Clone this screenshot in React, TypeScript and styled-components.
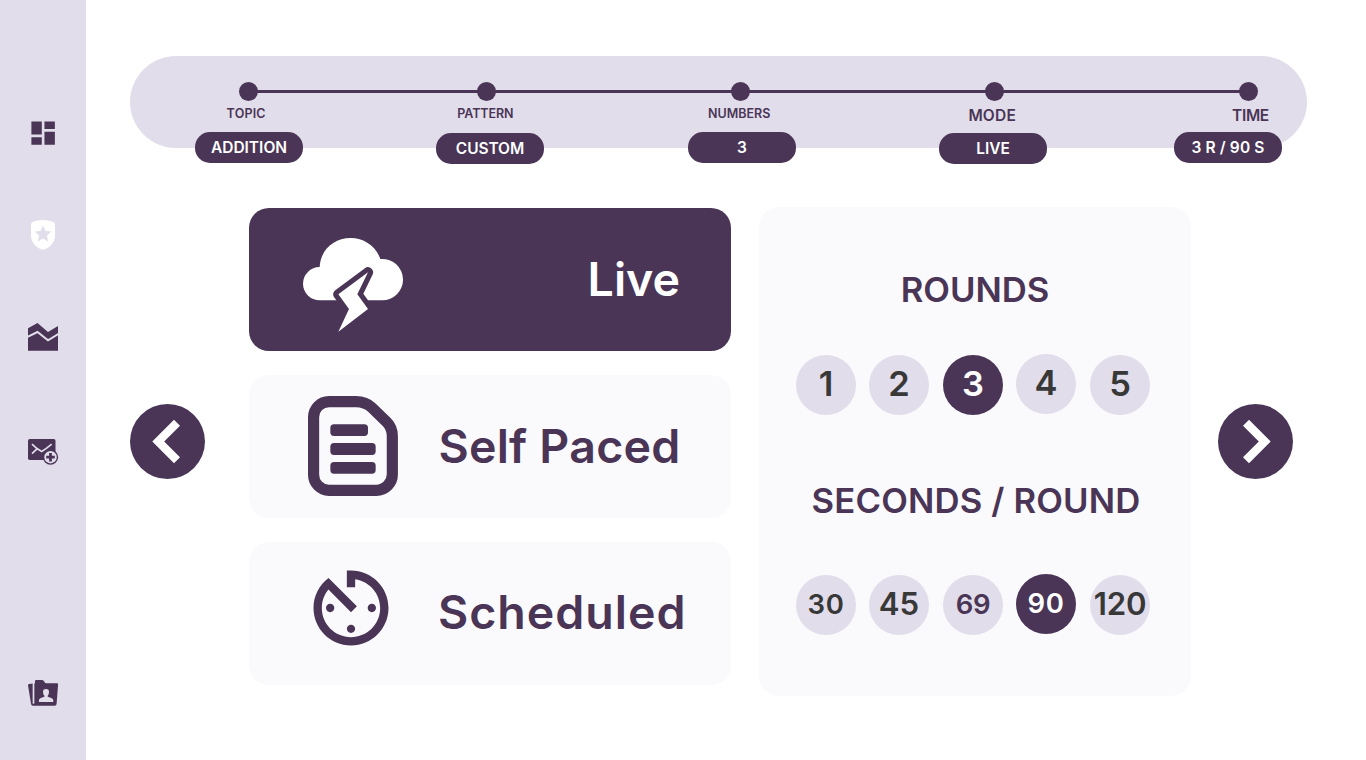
import React from 'react';
import styled, { createGlobalStyle } from 'styled-components';

const plum = '#4a3556';
const lilac = '#e1ddea';
const mist = '#fafafd';
const ink = '#383838';

const GlobalStyle = createGlobalStyle`
  * { box-sizing: border-box; }
  body {
    margin: 0;
    background: #fff;
    color: ${plum};
    font-family: Inter, 'Liberation Sans', sans-serif;
    font-weight: 600;
  }
  svg { display: block; flex: none; }
  button { font: inherit; color: inherit; border: 0; padding: 0; margin: 0; }
`;

const Page = styled.div`
  display: flex;
  width: 1366px;
  height: 760px;
  overflow: hidden;
`;

const Sidebar = styled.nav`
  flex: none;
  width: 86px;
  padding-top: 117px;
  background: ${lilac};
  display: flex;
  flex-direction: column;
  align-items: center;
`;

const NavItem = styled.a<{ $before: number }>`
  margin-top: ${p => p.$before}px;
`;

const Main = styled.main`
  flex: 1;
  padding: 56px 0 0 44px;
`;

const Stepper = styled.header`
  width: 1177px;
  height: 92px;
  border-radius: 46px;
  background: ${lilac};
  padding-top: 26px;
`;

const Track = styled.div`
  display: flex;
  align-items: center;
  padding-left: 109px;
`;

const Dot = styled.span`
  width: 19px;
  height: 19px;
  border-radius: 50%;
  background: ${plum};
`;

const Connector = styled.span<{ $length: number }>`
  width: ${p => p.$length + 2}px;
  height: 3px;
  margin: 0 -1px;
  background: ${plum};
`;

const Labels = styled.div`
  display: flex;
  height: 31px;
  padding-left: 66px;
`;

const StepLabel = styled.span<{ $before: number; $large?: boolean; $spacing?: number }>`
  width: 100px;
  margin-left: ${p => p.$before}px;
  text-align: center;
  font-weight: 600;
  font-size: ${p => (p.$large ? 15.5 : 12.5)}px;
  line-height: ${p => (p.$large ? 29 : 25)}px;
  letter-spacing: ${p => p.$spacing ?? 0}px;
`;

const Pills = styled.div`
  display: flex;
  align-items: flex-start;
  padding-left: 65px;
`;

const Pill = styled.span<{ $before: number; $lowered?: boolean; $spacing?: number }>`
  width: 108px;
  height: 31px;
  margin-left: ${p => p.$before}px;
  margin-top: ${p => (p.$lowered ? 1 : 0)}px;
  border-radius: 15px;
  background: ${plum};
  color: #fff;
  text-align: center;
  font-size: 15.5px;
  line-height: 31px;
  letter-spacing: ${p => p.$spacing ?? 0}px;
`;

const Body = styled.section`
  display: flex;
  align-items: center;
  margin-top: 59px;
  height: 489px;
`;

const ArrowButton = styled.button`
  width: 75px;
  height: 75px;
  margin-bottom: 20px;
  border-radius: 50%;
  background: ${plum};
`;

const Modes = styled.div`
  display: flex;
  flex-direction: column;
  gap: 24px;
  height: 100%;
  padding-top: 1px;
  margin-left: 44px;
`;

const ModeCard = styled.button<{ $active?: boolean; $right: number }>`
  display: flex;
  align-items: center;
  justify-content: space-between;
  width: 482px;
  height: 143px;
  padding: 0 ${p => p.$right}px 0 52px;
  border-radius: 20px;
  background: ${p => (p.$active ? plum : mist)};
  color: ${p => (p.$active ? '#fff' : plum)};
`;

const ModeIcon = styled.span<{ $left?: number; $top?: number; $bottom?: number }>`
  margin: ${p => p.$top ?? 0}px 0 ${p => p.$bottom ?? 0}px ${p => p.$left ?? 0}px;
`;

const ModeName = styled.span<{ $spacing?: number; $lift?: number }>`
  font-size: 46.5px;
  line-height: 56px;
  letter-spacing: ${p => p.$spacing ?? 0}px;
  padding-bottom: ${p => p.$lift ?? 2}px;
  white-space: nowrap;
`;

const Panel = styled.div`
  width: 432px;
  height: 489px;
  margin: 0 27px 0 28px;
  padding-top: 60px;
  border-radius: 20px;
  background: ${mist};
`;

const Heading = styled.h2<{ $before?: number; $shift?: number; $spacing?: number }>`
  margin: ${p => p.$before ?? 0}px 0 0;
  padding-left: ${p => p.$shift ?? 0}px;
  text-align: center;
  font-size: 34.7px;
  font-weight: 600;
  line-height: 45px;
  letter-spacing: ${p => p.$spacing ?? 0}px;
`;

const Options = styled.div<{ $before: number }>`
  display: flex;
  align-items: flex-start;
  margin-top: ${p => p.$before}px;
  padding-left: 37px;
`;

const Option = styled.button<{ $size: number; $tone?: 'active' | 'custom'; $spacing?: number; $line?: number }>`
  width: 60px;
  height: 60px;
  margin-right: 13px;
  border-radius: 50%;
  background: ${p => (p.$tone === 'active' ? plum : lilac)};
  color: ${p => (p.$tone === 'active' ? '#fff' : p.$tone === 'custom' ? plum : ink)};
  font-size: ${p => p.$size}px;
  line-height: ${p => p.$line ?? 58}px;
  padding-bottom: ${p => 60 - (p.$line ?? 58)}px;
  letter-spacing: ${p => p.$spacing ?? 0}px;
  text-align: center;

  &:nth-child(even) { margin-right: 14px; }
  &:nth-child(4) { margin-top: -1px; }
`;

const DashboardIcon = () => (
  <svg width="32" height="32" viewBox="0 0 24 24" fill={plum}>
    <path d="M3.300 13.100h7.800V3.300H3.300zm0 7.700h7.800v-5.700H3.300zm9.800 0h7.800V11.100h-7.800zm0-17.500v5.700h7.800V3.300z" />
  </svg>
);

const ShieldIcon = () => (
  <svg width="32" height="32" viewBox="0 0 32 32">
    <path
      fill="#fff"
      d="M16 1C11 1 7.200 2 5 3.600Q4 4.300 4 5.600V16.500C4 24 9.600 29 16 31C22.400 29 28 24 28 16.500V5.600Q28 4.300 27 3.600C24.800 2 21 1 16 1Z"
    />
    <path
      fill={lilac}
      d="M16 6.500 18.400 12 24.400 12.600 19.900 16.600 21.200 22.500 16 19.400 10.800 22.500 12.100 16.600 7.600 12.600 13.600 12Z"
    />
  </svg>
);

const ChartIcon = () => (
  <svg width="32" height="32" viewBox="0 0 32 32">
    <path fill={plum} d="M1 7.300 10.500 2 21 11 31 5V29.800H1Z" />
    <path fill="none" stroke={lilac} strokeWidth="2" d="M0 16.200 10.500 11 21 19.300 32 12.700" />
  </svg>
);

const MailIcon = () => (
  <svg width="32" height="32" viewBox="0 0 32 32">
    <rect x="1" y="3" width="27.500" height="21" rx="1.800" fill={plum} />
    <path
      fill="none"
      stroke={lilac}
      strokeWidth="1.700"
      d="M5 8.200 10 12.600 14.700 15.400 19 12.600 24.700 8.200M5 17.600 10 12.800"
    />
    <circle cx="23.500" cy="21.200" r="7.600" fill={plum} />
    <circle cx="23.500" cy="21.200" r="6.200" fill={lilac} />
    <path stroke={plum} strokeWidth="2.800" d="M23.500 16.900V25.500M19.200 21.200H27.800" />
  </svg>
);

const FolderIcon = () => (
  <svg width="32" height="32" viewBox="0 0 32 32">
    <path
      fill={plum}
      d="M8 4Q8 3 9 3H14.800Q16.200 3 17 4.300L18.400 6.300H30Q31.200 6.300 31.100 7.500L29.600 26.800Q29.500 28.700 27.800 28.700H6Q4.300 28.700 4 26.800L1 8.200Q.9 7 2 6.900L8 6.300Z"
    />
    <path stroke={lilac} strokeWidth="1.700" d="M6.500 6V26.700" />
    <path
      fill={lilac}
      d="M19 12.100A3 3 0 0 1 22 15.300Q22 17.500 20.700 18.700V19.700L24.300 21Q26.300 21.700 26.300 23.500V25H11.900V23.500Q11.900 21.700 13.800 21L17.400 19.700V18.700Q16 17.500 16 15.300A3 3 0 0 1 19 12.100Z"
    />
  </svg>
);

const StormIcon = () => (
  <svg width="100" height="94" viewBox="189 114 300 282">
    <path
      fill="#fff"
      d="M239 301A50 50 0 0 1 239 201C241 151 281 114 332 114C373 114 408 139 421 177A62 62 0 0 1 489 239A62 62 0 0 1 427 301Z"
    />
    <path
      fill={plum}
      stroke={plum}
      strokeWidth="31"
      strokeLinejoin="round"
      d="M384 217 295 283 327 327 295 394 384 327 352 283Z"
    />
    <path fill="#fff" d="M384 217 295 283 327 327 295 395 384 327 352 283Z" />
  </svg>
);

const DocumentIcon = () => (
  <svg width="90" height="100" viewBox="204 78 270 300">
    <path
      fill="none"
      stroke={plum}
      strokeWidth="33.500"
      d="M267 94.750H348Q377 94.750 396 113L440 156Q457 173 457 198V312A48 48 0 0 1 409 361H267A46.500 46.500 0 0 1 220.750 314V141A46.500 46.500 0 0 1 267 94.750Z"
    />
    <g fill={plum}>
      <rect x="271" y="163" width="113" height="35" rx="11" />
      <rect x="271" y="219" width="136" height="36" rx="11" />
      <rect x="271" y="276" width="136" height="35" rx="11" />
    </g>
  </svg>
);

const TimerIcon = () => (
  <svg width="100" height="100" viewBox="0 0 24 24" fill={plum}>
    <path d="M11 17c0 .55.45 1 1 1s1-.45 1-1-.45-1-1-1-1 .45-1 1zm0-14v4h2V5.080c3.390.490 6 3.390 6 6.920 0 3.870-3.130 7-7 7s-7-3.130-7-7c0-1.680.590-3.220 1.580-4.420L12 13l1.410-1.410-6.800-6.800v.020C4.420 6.450 3 9.050 3 12c0 4.970 4.020 9 9 9 4.970 0 9-4.030 9-9s-4.030-9-9-9h-1zm7 9c0-.550-.450-1-1-1s-1 .450-1 1 .450 1 1 1 1-.450 1-1zM6 12c0 .550.450 1 1 1s1-.450 1-1-.450-1-1-1-1 .450-1 1z" />
  </svg>
);

const Chevron = ({ next }: { next?: boolean }) => (
  <svg width="75" height="75" viewBox="0 0 75 75">
    <path
      fill="#fff"
      transform={next ? 'translate(75 0) scale(-1 1)' : undefined}
      d="M22.300 37.500 44 15.700 50 21.700 34.200 37.500 50 53.300 44 59.300Z"
    />
  </svg>
);

export default function App() {
  return (
    <>
      <GlobalStyle />
      <Page>
        <Sidebar>
          <NavItem $before={0}><DashboardIcon /></NavItem>
          <NavItem $before={70}><ShieldIcon /></NavItem>
          <NavItem $before={70}><ChartIcon /></NavItem>
          <NavItem $before={83}><MailIcon /></NavItem>
          <NavItem $before={209}><FolderIcon /></NavItem>
        </Sidebar>
        <Main>
          <Stepper>
            <Track>
              <Dot />
              <Connector $length={219} />
              <Dot />
              <Connector $length={235} />
              <Dot />
              <Connector $length={235} />
              <Dot />
              <Connector $length={235} />
              <Dot />
            </Track>
            <Labels>
              <StepLabel $before={0.2} $spacing={0.2}>TOPIC</StepLabel>
              <StepLabel $before={139.2} $spacing={-0.1}>PATTERN</StepLabel>
              <StepLabel $before={153.8}>NUMBERS</StepLabel>
              <StepLabel $before={153} $large $spacing={0.2}>MODE</StepLabel>
              <StepLabel $before={158.3} $large $spacing={-0.3}>TIME</StepLabel>
            </Labels>
            <Pills>
              <Pill $before={0}>ADDITION</Pill>
              <Pill $before={133} $lowered $spacing={-0.1}>CUSTOM</Pill>
              <Pill $before={144}>3</Pill>
              <Pill $before={143} $lowered>LIVE</Pill>
              <Pill $before={127} $spacing={0.15}>3 R / 90 S</Pill>
            </Pills>
          </Stepper>
          <Body>
            <ArrowButton aria-label="Previous"><Chevron /></ArrowButton>
            <Modes>
              <ModeCard $active $right={51}>
                <ModeIcon $left={2} $top={11}><StormIcon /></ModeIcon>
                <ModeName>Live</ModeName>
              </ModeCard>
              <ModeCard $right={50.5}>
                <ModeIcon $left={7} $bottom={1}><DocumentIcon /></ModeIcon>
                <ModeName $spacing={0.25}>Self Paced</ModeName>
              </ModeCard>
              <ModeCard $right={44.5}>
                <ModeIcon $bottom={11}><TimerIcon /></ModeIcon>
                <ModeName $spacing={1} $lift={3}>Scheduled</ModeName>
              </ModeCard>
            </Modes>
            <Panel>
              <Heading $spacing={-0.05}>ROUNDS</Heading>
              <Options $before={43}>
                <Option $size={34.5}>1</Option>
                <Option $size={34.5}>2</Option>
                <Option $size={34.5} $tone="active">3</Option>
                <Option $size={34.5}>4</Option>
                <Option $size={34.5}>5</Option>
              </Options>
              <Heading $before={63} $shift={2} $spacing={0.15}>SECONDS / ROUND</Heading>
              <Options $before={52}>
                <Option $size={27.5} $spacing={0.6}>30</Option>
                <Option $size={31.2}>45</Option>
                <Option $size={27.5} $tone="custom" $spacing={-0.4}>69</Option>
                <Option $size={27.5} $tone="active" $spacing={0.6}>90</Option>
                <Option $size={31.2} $spacing={-0.2}>120</Option>
              </Options>
            </Panel>
            <ArrowButton aria-label="Next"><Chevron next /></ArrowButton>
          </Body>
        </Main>
      </Page>
    </>
  );
}
